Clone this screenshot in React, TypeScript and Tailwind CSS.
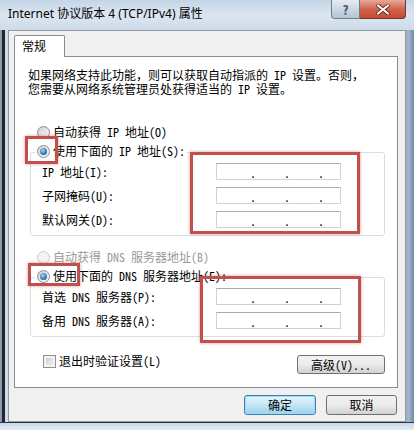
import React from 'react';

const cjk = { fontFamily: '"Noto Sans Mono CJK SC", "Noto Sans CJK SC", sans-serif' };

function Radio({ checked, disabled }: { checked?: boolean; disabled?: boolean }) {
  return (
    <span
      className={`flex h-[13px] w-[13px] shrink-0 items-center justify-center rounded-full border ${
        disabled
          ? 'border-[#cdcdcd] bg-[#f4f4f4]'
          : 'border-[#8e8f8f] bg-linear-to-br from-[#cfcfcf] to-[#fbfbfb]'
      }`}
    >
      {checked && (
        <span className="h-[7px] w-[7px] rounded-full bg-[radial-gradient(circle_at_40%_35%,#9fd6f7,#2e78b5_60%,#1a4d7a)]" />
      )}
    </span>
  );
}

function IpBox() {
  return (
    <div className="ml-auto mr-[43px] flex h-[17px] w-[125px] items-center gap-[28px] border border-[#d2d2d2] border-t-[#a9abb1] bg-white pl-[33px] pt-[2px] text-[12px] leading-none text-black">
      <span>.</span>
      <span>.</span>
      <span>.</span>
    </div>
  );
}

function Row({ label }: { label: string }) {
  return (
    <div className="flex h-[17px] items-center">
      <span className="pl-[11px] text-[12px] leading-none text-black">{label}</span>
      <IpBox />
    </div>
  );
}

function Mark({ className }: { className: string }) {
  return (
    <div
      className={`pointer-events-none absolute z-20 border-[3px] border-[#c0504d] shadow-[0_0_3px_rgba(192,80,77,0.6)] ${className}`}
    />
  );
}

export default function App() {
  return (
    <div
      className="relative flex h-[430px] w-[414px] flex-col overflow-hidden bg-[#c3d2e1]"
      style={cjk}
    >
      {/* title bar */}
      <div className="flex h-[30px] shrink-0 items-start bg-linear-to-b from-[#c5d5e6] via-[#dbe6f1] to-[#cddbe8]">
        <span
          className="pl-2 pt-[8px] text-[12px] leading-none text-black"
          style={{ fontFamily: '"Noto Sans", "Noto Sans CJK SC", sans-serif' }}
        >
          Internet 协议版本 4 (TCP/IPv4) 属性
        </span>
        <div className="ml-auto mr-[8px] flex">
          <div className="flex h-[19px] w-[29px] items-center justify-center rounded-bl-[4px] border border-t-0 border-[#6f7c8b] bg-linear-to-b from-[#e4ebf2] to-[#b5c4d4] text-[13px] font-bold leading-none text-[#49586a]">
            ?
          </div>
          <div className="flex h-[19px] w-[46px] items-center justify-center rounded-br-[4px] border border-l-0 border-t-0 border-[#6f3a2e] bg-linear-to-b from-[#e6a898] via-[#d0654d] to-[#c34a30]">
            <svg width="14" height="11" viewBox="0 0 14 11">
              <path d="M2 1.5 L12 9.5 M12 1.5 L2 9.5" stroke="#5a2418" strokeWidth="3.6" strokeLinecap="round" />
              <path d="M2 1.5 L12 9.5 M12 1.5 L2 9.5" stroke="#ffffff" strokeWidth="2.2" strokeLinecap="round" />
            </svg>
          </div>
        </div>
      </div>

      {/* body */}
      <div className="flex flex-1">
        <div className="flex w-[8px] shrink-0">
          <div className="w-[2px] bg-[#8d9aa7]" />
          <div className="w-[3px] bg-[#1c2836]" />
          <div className="w-[3px] bg-[#d5dbe1]" />
        </div>

        <div className="flex flex-1 flex-col border border-[#8f9aa6] bg-[#f0f0f0] pl-[5px] pr-[7px] pt-[4px]">
          {/* tab */}
          <div className="relative z-10 -mb-px h-[22px] w-[51px] rounded-t-[2px] border border-b-0 border-[#898c95] bg-white pl-[7px] pt-[4px] text-[12px] leading-none text-black">
            常规
          </div>

          {/* panel */}
          <div className="flex h-[332px] flex-col border border-[#898c95] bg-white pl-[15px] pr-[12px] text-[12px] leading-none text-black">
            <p className="-ml-[2px] pt-[11px] text-[12px] leading-[14px]">
              如果网络支持此功能，则可以获取自动指派的 IP 设置。否则，
              <br />
              您需要从网络系统管理员处获得适当的 IP 设置。
            </p>

            <div className="ml-[7px] mt-[28px] flex h-4 items-center gap-[3px]">
              <Radio />
              <span>自动获得 IP 地址(O)</span>
            </div>
            <div className="relative z-10 ml-[5px] mt-[3px] flex h-4 items-center gap-[3px] self-start bg-white pl-[2px] pr-[2px]">
              <Radio checked />
              <span>使用下面的 IP 地址(S):</span>
            </div>
            <div className="-mt-[7px] flex flex-col gap-[7px] rounded-[3px] border border-[#d5dfe5] pb-[7px] pt-[10px]">
              <Row label="IP 地址(I):" />
              <Row label="子网掩码(U):" />
              <Row label="默认网关(D):" />
            </div>

            <div className="ml-[7px] mt-[13px] flex h-4 items-center gap-[3px] text-[#9a9a9a]">
              <Radio disabled />
              <span>自动获得 DNS 服务器地址(B)</span>
            </div>
            <div className="relative z-10 ml-[5px] mt-[3px] flex h-4 items-center gap-[3px] self-start bg-white pl-[2px] pr-[2px]">
              <Radio checked />
              <span>使用下面的 DNS 服务器地址(E):</span>
            </div>
            <div className="-mt-[7px] flex flex-col gap-[7px] rounded-[3px] border border-[#d5dfe5] pb-[7px] pt-[10px]">
              <Row label="首选 DNS 服务器(P):" />
              <Row label="备用 DNS 服务器(A):" />
            </div>

            <div className="mt-[16px] flex items-start">
              <div className="ml-[13px] flex h-4 items-center gap-[3px]">
                <span className="h-[13px] w-[13px] border border-[#8e8f8f] bg-linear-to-br from-[#cbcbcb] to-[#f4f4f4] shadow-[inset_0_0_0_2px_#f3f3f3]" />
                <span>退出时验证设置(L)</span>
              </div>
              <button className="ml-auto mt-[2px] flex h-[19px] w-[88px] items-center justify-center rounded-[3px] border border-[#707070] bg-linear-to-b from-[#f2f2f2] via-[#ebebeb] to-[#d2d2d2] text-[12px] leading-none text-black">
                高级(V)...
              </button>
            </div>
          </div>

          {/* dialog buttons */}
          <div className="mt-[7px] flex justify-end gap-[10px] pr-px">
            <button className="flex h-[20px] w-[72px] items-center justify-center rounded-[3px] border border-[#3c7fb1] bg-linear-to-b from-[#e8f5fc] via-[#c4e5f6] to-[#98d1ef] text-[12px] leading-none text-black shadow-[inset_0_0_0_1px_#9cdcf7]">
              确定
            </button>
            <button className="flex h-[20px] w-[71px] items-center justify-center rounded-[3px] border border-[#707070] bg-linear-to-b from-[#f2f2f2] via-[#ebebeb] to-[#d2d2d2] text-[12px] leading-none text-black">
              取消
            </button>
          </div>
        </div>

        <div className="flex w-[8px] shrink-0">
          <div className="w-[2px] bg-[#9fb0c1]" />
          <div className="w-[6px] bg-linear-to-r from-[#a9bccf] to-[#6f8aa6]" />
        </div>
      </div>

      {/* bottom frame */}
      <div className="h-[8px] shrink-0 border-t border-[#2a3747] bg-linear-to-b from-[#c9d7e5] to-[#e3ecf4]" />

      {/* annotations */}
      <Mark className="left-[25px] top-[136px] h-[28px] w-[33px]" />
      <Mark className="left-[190px] top-[152px] h-[82px] w-[170px]" />
      <Mark className="left-[28px] top-[263px] h-[23px] w-[52px]" />
      <Mark className="left-[200px] top-[276px] h-[67px] w-[161px]" />
    </div>
  );
}
